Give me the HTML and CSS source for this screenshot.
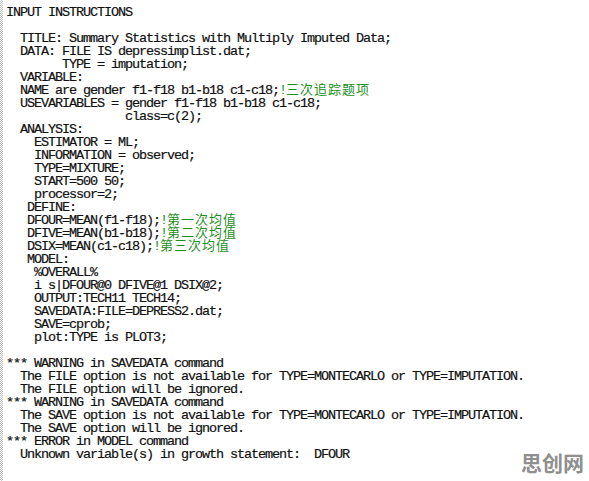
FILE: index.html
```
<!DOCTYPE html>
<html>
<head>
<meta charset="utf-8">
<link rel="stylesheet" href="styles.css">
</head>
<body>
<div class="screen">
<pre class="out">INPUT INSTRUCTIONS

  TITLE: Summary Statistics with Multiply Imputed Data;
  DATA: FILE IS depressimplist.dat;
        TYPE = imputation;
  VARIABLE:
  NAME are gender f1-f18 b1-b18 c1-c18;<span class="cm">!<span class="cn">三次追踪题项</span></span>
  USEVARIABLES = gender f1-f18 b1-b18 c1-c18;
                 class=c(2);
  ANALYSIS:
    ESTIMATOR = ML;
    INFORMATION = observed;
    TYPE=MIXTURE;
    START=500 50;
    processor=2;
   DEFINE:
   DFOUR=MEAN(f1-f18);<span class="cm">!<span class="cn">第一次均值</span></span>
   DFIVE=MEAN(b1-b18);<span class="cm">!<span class="cn">第二次均值</span></span>
   DSIX=MEAN(c1-c18);<span class="cm">!<span class="cn">第三次均值</span></span>
   MODEL:
    %OVERALL%
    i s|DFOUR@0 DFIVE@1 DSIX@2;
    OUTPUT:TECH11 TECH14;
    SAVEDATA:FILE=DEPRESS2.dat;
    SAVE=cprob;
    plot:TYPE is PLOT3;

*** WARNING in SAVEDATA command
  The FILE option is not available for TYPE=MONTECARLO or TYPE=IMPUTATION.
  The FILE option will be ignored.
*** WARNING in SAVEDATA command
  The SAVE option is not available for TYPE=MONTECARLO or TYPE=IMPUTATION.
  The SAVE option will be ignored.
*** ERROR in MODEL command
  Unknown variable(s) in growth statement:  DFOUR</pre>
<div class="mark">思创网</div>
</div>
</body>
</html>
```
FILE: styles.css
```
html, body {
  margin: 0;
  padding: 0;
  background: #fff;
}
.screen {
  position: relative;
  width: 589px;
  height: 481px;
  overflow: hidden;
  background:
    linear-gradient(#fff, #fff) 3px 0 / 100% 100% no-repeat,
    repeating-conic-gradient(#c4c4c4 0 25%, #fff 0 50%) 0 0 / 2px 2px;
}
.out {
  margin: 0;
  padding: 6px 0 0 6px;
  font-family: "Liberation Mono", monospace;
  font-size: 13.5px;
  letter-spacing: -1.1px;
  line-height: 13px;
  color: #111;
  -webkit-text-stroke: 0.2px #111;
}
.cm {
  color: #1d8f1d;
  -webkit-text-stroke: 0;
}
.cn {
  font-family: "Noto Sans CJK SC", sans-serif;
  font-size: 13px;
  letter-spacing: 1px;
  line-height: 0;
}
.mark {
  position: absolute;
  right: 6px;
  bottom: 8px;
  width: 62px;
  height: 21px;
  white-space: nowrap;
  font-family: "Noto Sans CJK SC", sans-serif;
  font-weight: 700;
  font-size: 21px;
  line-height: 21px;
  letter-spacing: 0;
  color: #8f8f8f;
}
```
